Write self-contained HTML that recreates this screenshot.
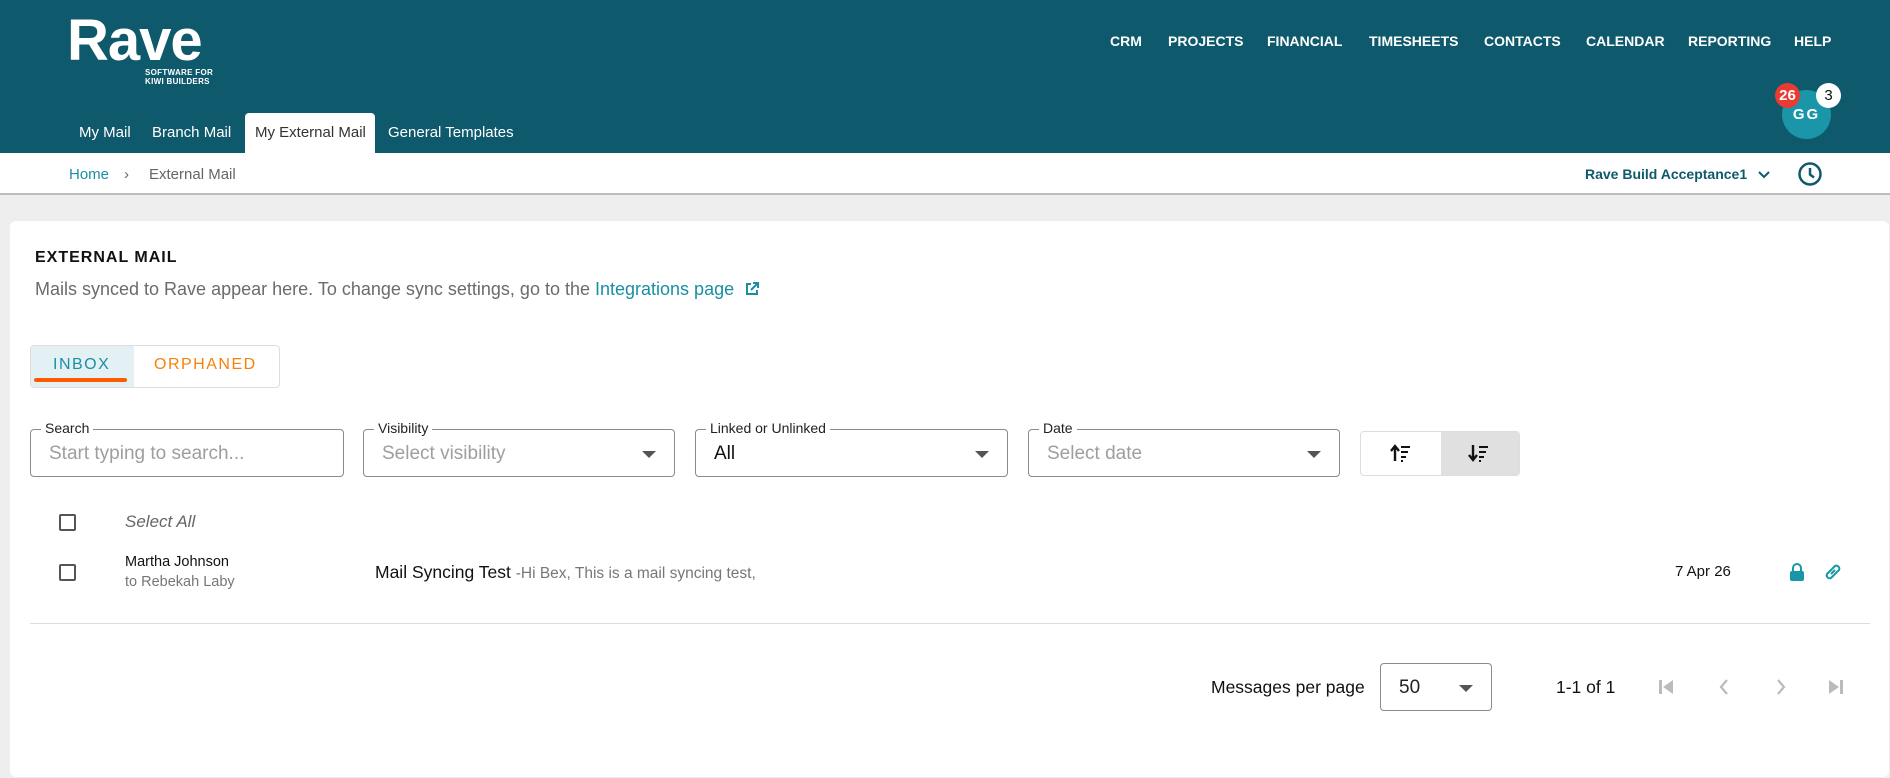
<!DOCTYPE html>
<html><head><meta charset="utf-8"><style>
*{box-sizing:border-box;margin:0;padding:0}
body{width:1890px;height:778px;overflow:hidden;background:#eeeeee;font-family:"Liberation Sans",sans-serif;position:relative;color:#222}
.abs{position:absolute;white-space:nowrap}
#hdr{position:absolute;left:0;top:0;width:1890px;height:153px;background:#0f596c}
.nav{top:33px;font-size:14px;font-weight:bold;color:#fff}
.sub{top:124px;font-size:15px;color:#fff}
#bc{position:absolute;left:0;top:153px;width:1890px;height:42px;background:#fff;border-bottom:2px solid #bdbdbd}
#card{position:absolute;left:10px;top:221px;width:1879px;height:556px;background:#fff;border-radius:6px}
.fld{position:absolute;top:429px;height:48px;border:1px solid #8a8a8a;border-radius:4px}
.fld .lb{position:absolute;left:10px;top:-10px;background:#fff;padding:0 4px;font-size:14px;color:#222}
.fld .v{position:absolute;left:18px;top:13px;font-size:19px;color:#9e9e9e}
.tri{position:absolute;right:18px;top:21px;width:0;height:0;border-left:7px solid transparent;border-right:7px solid transparent;border-top:7px solid #555}
.cb{position:absolute;width:17px;height:17px;border:2px solid #555;border-radius:2px}
</style></head><body>
<div id="hdr"></div>
<div class="abs" style="left:67px;top:7px;font-size:58px;font-weight:bold;color:#fff;letter-spacing:-1px">Rave</div>
<div class="abs" style="left:145px;top:68px;font-size:8px;font-weight:bold;color:#fff;line-height:9px;letter-spacing:.3px">SOFTWARE FOR<br>KIWI BUILDERS</div>
<div class="abs nav" style="left:1110px">CRM</div>
<div class="abs nav" style="left:1168px">PROJECTS</div>
<div class="abs nav" style="left:1267px">FINANCIAL</div>
<div class="abs nav" style="left:1369px">TIMESHEETS</div>
<div class="abs nav" style="left:1484px">CONTACTS</div>
<div class="abs nav" style="left:1586px">CALENDAR</div>
<div class="abs nav" style="left:1688px">REPORTING</div>
<div class="abs nav" style="left:1794px">HELP</div>
<div class="abs" style="left:1782px;top:90px;width:49px;height:49px;border-radius:50%;background:#1a96a8;color:#fff;font-size:15px;font-weight:bold;text-align:center;line-height:49px;letter-spacing:2px">GG</div>
<div class="abs" style="left:1775px;top:83px;width:25px;height:25px;border-radius:50%;background:#ea3b33;color:#fff;font-size:15px;font-weight:bold;text-align:center;line-height:25px">26</div>
<div class="abs" style="left:1816px;top:83px;width:25px;height:25px;border-radius:50%;background:#fff;color:#111;font-size:15px;text-align:center;line-height:25px">3</div>
<div class="abs" style="left:245px;top:113px;width:130px;height:41px;background:#fff;border-radius:4px 4px 0 0"></div>
<div class="abs sub" style="left:79px">My Mail</div>
<div class="abs sub" style="left:152px">Branch Mail</div>
<div class="abs sub" style="left:255px;color:#333">My External Mail</div>
<div class="abs sub" style="left:388px">General Templates</div>
<div id="bc"></div>
<div class="abs" style="left:69px;top:166px;font-size:15px;color:#1a8fa3">Home</div>
<div class="abs" style="left:124px;top:166px;font-size:15px;color:#666">›</div>
<div class="abs" style="left:149px;top:166px;font-size:15px;color:#666">External Mail</div>
<div class="abs" style="left:1585px;top:166px;font-size:14px;font-weight:bold;color:#0f596c">Rave Build Acceptance1</div>
<svg class="abs" style="left:1757px;top:168px" width="14" height="14" viewBox="0 0 14 14"><path d="M2 4l5 5 5-5" fill="none" stroke="#0f596c" stroke-width="2"/></svg>
<svg class="abs" style="left:1797px;top:161px" width="26" height="26" viewBox="0 0 26 26"><circle cx="13" cy="13" r="10.5" fill="none" stroke="#0f596c" stroke-width="2.5"/><path d="M13 7v6.5l4 3" fill="none" stroke="#0f596c" stroke-width="2.5"/></svg>
<div id="card"></div>
<div class="abs" style="left:35px;top:249px;font-size:16px;font-weight:bold;color:#111;letter-spacing:1px">EXTERNAL MAIL</div>
<div class="abs" style="left:35px;top:279px;font-size:18px;color:#6b6b6b">Mails synced to Rave appear here. To change sync settings, go to the <span style="color:#1a8fa3">Integrations page</span></div>
<svg class="abs" style="left:744px;top:281px" width="16" height="16" viewBox="0 0 16 16"><path d="M7 3H3v10h10V9M9 2h5v5M14 2L7 9" fill="none" stroke="#1a8fa3" stroke-width="2"/></svg>
<div class="abs" style="left:30px;top:345px;width:250px;height:43px;border:1px solid #ddd;border-radius:4px;overflow:hidden"><div style="position:absolute;left:0;top:0;width:103px;height:43px;background:#e3f1f5"></div></div>
<div class="abs" style="left:53px;top:356px;font-size:16px;color:#1a8fa3;letter-spacing:1.5px">INBOX</div>
<div class="abs" style="left:154px;top:356px;font-size:16px;color:#f5820a;letter-spacing:1.5px">ORPHANED</div>
<div class="abs" style="left:34px;top:378px;width:93px;height:4px;background:#ff5a00;border-radius:2px"></div>
<div class="fld" style="left:30px;width:314px"><span class="lb">Search</span><span class="v">Start typing to search...</span></div>
<div class="fld" style="left:363px;width:312px"><span class="lb">Visibility</span><span class="v">Select visibility</span><i class="tri"></i></div>
<div class="fld" style="left:695px;width:313px"><span class="lb">Linked or Unlinked</span><span class="v" style="color:#111">All</span><i class="tri"></i></div>
<div class="fld" style="left:1028px;width:312px"><span class="lb">Date</span><span class="v">Select date</span><i class="tri"></i></div>
<div class="abs" style="left:1360px;top:431px;width:160px;height:45px;border:1px solid #ddd;border-radius:4px;overflow:hidden"><div style="position:absolute;left:80px;top:0;width:80px;height:45px;background:#e0e0e0"></div></div>
<svg class="abs" style="left:1390px;top:443px" width="22" height="20" viewBox="0 0 22 20"><path d="M5 18V4M1 8l4-5 4 5" fill="none" stroke="#111" stroke-width="2.4"/><path d="M11 4h9M11 9h7M11 14h5M11 18h2" stroke="#111" stroke-width="2"/></svg>
<svg class="abs" style="left:1468px;top:443px" width="22" height="20" viewBox="0 0 22 20"><path d="M5 2v14M1 12l4 5 4-5" fill="none" stroke="#111" stroke-width="2.4"/><path d="M11 4h9M11 9h7M11 14h5M11 18h2" stroke="#111" stroke-width="2"/></svg>
<div class="cb" style="left:59px;top:514px"></div>
<div class="abs" style="left:125px;top:512px;font-size:17px;font-style:italic;color:#666">Select All</div>
<div class="cb" style="left:59px;top:564px"></div>
<div class="abs" style="left:125px;top:554px;font-size:14.5px;color:#111">Martha Johnson</div>
<div class="abs" style="left:125px;top:574px;font-size:14.5px;color:#777">to Rebekah Laby</div>
<div class="abs" style="left:375px;top:562px;font-size:17.5px;color:#111">Mail Syncing Test <span style="font-size:15.5px;color:#777">-Hi Bex, This is a mail syncing test,</span></div>
<div class="abs" style="left:1675px;top:563px;font-size:15px;color:#111">7 Apr 26</div>
<svg class="abs" style="left:1789px;top:563px" width="16" height="18" viewBox="0 0 16 18"><path d="M4 8V5a4 4 0 018 0v3" fill="none" stroke="#1a96a8" stroke-width="2"/><rect x="1" y="8" width="14" height="10" rx="2" fill="#1a96a8"/></svg>
<svg class="abs" style="left:1823px;top:563px" width="20" height="18" viewBox="0 0 20 18"><g fill="none" stroke="#1a96a8" stroke-width="2"><path d="M9 6l-5 5a3 3 0 004 4l3-3"/><path d="M11 12l5-5a3 3 0 00-4-4l-3 3"/><path d="M8 11l4-4"/></g></svg>
<div class="abs" style="left:30px;top:623px;width:1840px;height:1px;background:#ddd"></div>
<div class="abs" style="left:1211px;top:677px;font-size:17.5px;color:#111">Messages per page</div>
<div class="abs" style="left:1380px;top:663px;width:112px;height:48px;border:1px solid #8a8a8a;border-radius:4px"><span style="position:absolute;left:18px;top:13px;font-size:19px">50</span><i class="tri"></i></div>
<div class="abs" style="left:1556px;top:677px;font-size:17.5px;color:#111">1-1 of 1</div>
<svg class="abs" style="left:1657px;top:677px" width="200" height="20" viewBox="0 0 200 20"><g fill="#bbb"><rect x="2" y="3" width="3" height="14"/><path d="M16 3v14l-10-7z"/><path d="M172 3v14l10-7z"/><rect x="183" y="3" width="3" height="14"/></g><g fill="none" stroke="#bbb" stroke-width="2.2"><path d="M70 3l-6 7 6 7"/><path d="M121 3l6 7-6 7"/></g></svg>
</body></html>
